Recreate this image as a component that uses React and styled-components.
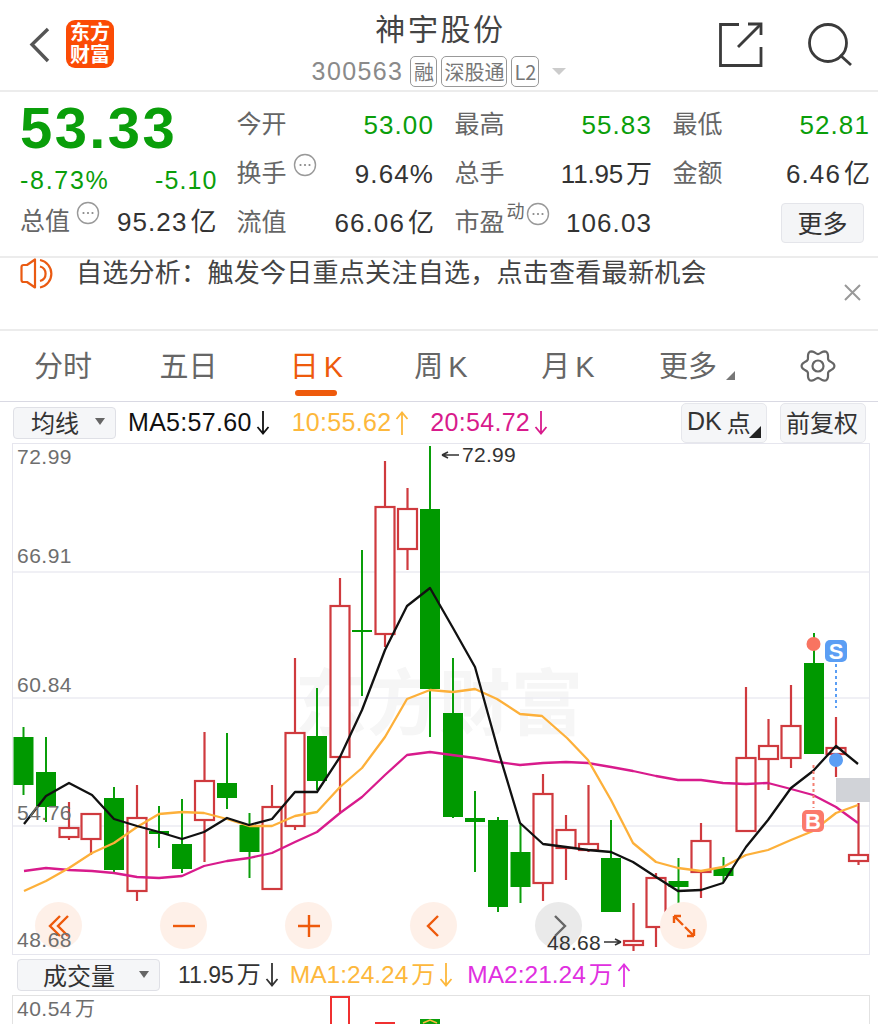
import React from 'react';
import styled, { createGlobalStyle } from 'styled-components';

const Global = createGlobalStyle`
  html, body { margin: 0; padding: 0; background: #fff; }
  body { font-family: "Liberation Sans", "Noto Sans CJK SC", sans-serif; width: 878px; height: 1024px; overflow: hidden; }
  * { box-sizing: border-box; }
`;

const GREEN = '#0a9e0a';
const Page = styled.div`
  width: 878px; height: 1024px; overflow: hidden; background: #fff; color: #333;
`;

/* Header */
const Header = styled.header`
  height: 92px; display: grid; grid-template-columns: 1fr auto 1fr; border-bottom: 2px solid #ececec;
`;
const HeaderLeft = styled.div`
  display: flex; align-items: flex-start; padding: 20px 0 0 28px; gap: 14px;
`;
const HeaderRight = styled.div`
  display: flex; justify-content: flex-end; align-items: flex-start; padding: 22px 25px 0 0; gap: 43px;
`;
const Logo = styled.svg`
  width: 48px; height: 48px; flex: none; overflow: visible;
`;
const HeaderCenter = styled.div`
  display: flex; flex-direction: column; align-items: center; padding-top: 6px;
`;
const Title = styled.div`
  font-family: "Noto Sans CJK SC", sans-serif; font-size: 30px; line-height: 42px; letter-spacing: 2.6px; color: #444; height: 42px; margin-left: 3px;
`;
const SubRow = styled.div`
  display: flex; align-items: center; margin-top: 7px; height: 32px; color: #8a8a8a;
`;
const Code = styled.span`
  font-size: 25px; letter-spacing: 1.4px; margin-right: 7px;
`;
const Badge = styled.span`
  display: inline-flex; align-items: center; justify-content: center; height: 31px; padding: 0 2px; margin-right: 4px;
  border: 1px solid #999; border-radius: 5px; font-family: "Noto Sans CJK SC", sans-serif; font-size: 20px; color: #777;
  min-width: 27px;
`;
const Caret = styled.span`
  width: 0; height: 0; margin-left: 9px; border-left: 7px solid transparent; border-right: 7px solid transparent; border-top: 7px solid #ccc;
`;

/* Quote */
const Quote = styled.section`
  height: 166px; display: flex; padding: 8px 8px 0 20px; border-bottom: 2px solid #ececec;
`;
const LeftBlock = styled.div`
  width: 197px; margin-right: 20px; display: flex; flex-direction: column;
`;
const Price = styled.div`
  font-size: 58px; font-weight: 700; line-height: 56px; height: 56px; color: ${GREEN}; letter-spacing: 2.4px;
`;
const ChangeRow = styled.div`
  height: 48px; display: flex; align-items: center; justify-content: space-between; color: ${GREEN}; font-size: 25px;
`;
const ChangeVal = styled.span`
  letter-spacing: ${p => p.$ls}px; margin-right: ${p => p.$mr || 0}px;
`;
const TotalRow = styled.div`
  height: 36px; display: flex; align-items: center; justify-content: space-between;
`;
const Stats = styled.div`
  flex: 1; display: grid; grid-template-columns: repeat(3, 197.5px); column-gap: 20.5px; grid-auto-rows: 49px;
`;
const Stat = styled.div`
  display: flex; align-items: center; justify-content: space-between;
`;
const Label = styled.span`
  display: inline-flex; align-items: flex-start; font-family: "Noto Sans CJK SC", sans-serif; font-size: 25px; color: #666; line-height: 30px; white-space: nowrap;
  padding-bottom: 6px;
`;
const Value = styled.span`
  font-size: 26px; line-height: 30px; letter-spacing: ${p => p.$tight ? '-0.2px' : '1.1px'}; color: ${p => p.$green ? GREEN : '#333'}; white-space: nowrap;
  font-family: "Liberation Sans", sans-serif;
`;
const Unit = styled.span`
  font-family: "Noto Sans CJK SC", sans-serif; font-size: ${p => p.$size || 26}px; line-height: 1; letter-spacing: 0; margin-left: 3px;
`;
const Sup = styled.span`
  font-size: 18px; line-height: 18px; margin: -4px 0 0 2px; color: #666;
`;
const MoreBtn = styled.div`
  width: 83px; height: 40px; margin-left: auto; margin-right: 6px; background: #f4f5f7; border: 1px solid #e4e5ea; border-radius: 4px;
  display: flex; align-items: center; justify-content: center; padding-bottom: 2px; font-family: "Noto Sans CJK SC", sans-serif; font-size: 25px; color: #333;
`;
const DotsWrap = styled.svg`
  width: 24px; height: 24px; margin: -3px 0 0 ${p => p.$ml}px; flex: none;
`;

/* Notice */
const Notice = styled.section`
  height: 73px; position: relative; display: flex; align-items: flex-start; padding: 0 0 0 20px; border-bottom: 2px solid #ececec;
`;
const NoticeText = styled.div`
  font-family: "Noto Sans CJK SC", sans-serif; font-size: 26px; line-height: 30px; margin: -2px 0 0 21px; color: #444; letter-spacing: .28px;
`;
const Close = styled.svg`
  position: absolute; right: 17px; top: 26px; width: 17px; height: 17px;
`;

/* Tabs */
const Tabs = styled.nav`
  height: 71px; display: grid; grid-template-columns: 126px 125px 131px 118px 136px 104px 138px; border-bottom: 1px solid #d9d9e3;
`;
const Tab = styled.div`
  position: relative; display: flex; align-items: center; justify-content: center; padding-bottom: 5px;
  font-family: "Noto Sans CJK SC", sans-serif; font-size: 29px; color: ${p => p.$active ? '#ee5a0c' : '#666'};
`;
const GearTab = styled(Tab)`
  padding: 0 0 0 18px;
`;
const TabK = styled.span`
  font-family: "Liberation Sans", sans-serif; font-size: 29px; margin-left: 5px;
`;
const Underline = styled.i`
  position: absolute; left: 50%; margin-left: -22px; bottom: 5px; width: 42px; height: 6px; border-radius: 3px; background: #ee5a0c;
`;
const CornerMark = styled.i`
  position: absolute; right: 5px; bottom: 21px; width: 0; height: 0; border-left: 9px solid transparent; border-bottom: 9px solid #777;
`;

/* Indicator rows */
const IndicatorRow = styled.div`
  height: ${p => p.$h || 41}px; display: flex; align-items: center; position: relative; padding-left: ${p => p.$pl || 13}px; font-size: ${p => p.$fs || 25}px;
`;
const Select = styled.div`
  width: ${p => p.$w}px; height: 32px; display: flex; align-items: center; justify-content: space-between; padding: 0 10px 2px ${p => p.$pl}px; margin-right: ${p => p.$mr}px;
  background: #f5f6f8; border: 1px solid #dfe0e6; border-radius: 4px; font-family: "Noto Sans CJK SC", sans-serif; font-size: 24px; color: #333; flex: none;
`;
const SelectCaret = styled.i`
  width: 0; height: 0; border-left: 5px solid transparent; border-right: 5px solid transparent; border-top: 7px solid #666;
`;
const MaText = styled.span`
  display: inline-flex; align-items: center; color: ${p => p.$c}; margin-right: ${p => p.$mr || 0}px; white-space: nowrap; letter-spacing: ${p => p.$ls ?? 0.3}px;
  font-family: "Liberation Sans", "Noto Sans CJK SC", sans-serif; font-size: ${p => p.$fs ? `${p.$fs}px` : 'inherit'};
`;
const ArrowSvg = styled.svg`
  width: 14px; height: 26px; margin-left: 4px; flex: none;
`;
const RightBtns = styled.div`
  margin-left: auto; margin-right: 12px; display: flex; gap: 13px;
`;
const SmallBtn = styled.div`
  position: relative; height: 40px; width: ${p => p.$w}px; background: #f5f6f8; border: 1px solid #e6e7ec; border-radius: 5px;
  display: flex; align-items: center; padding: 0 0 2px 5px; font-family: "Noto Sans CJK SC", sans-serif; font-size: 24px; color: #333; white-space: nowrap;
`;
const Dk = styled.span`
  font-family: "Liberation Sans", sans-serif; font-size: 25px; margin-right: 5px;
`;
const CornerBlack = styled.i`
  position: absolute; right: 5px; bottom: 4px; width: 0; height: 0; border-left: 12px solid transparent; border-bottom: 12px solid #222;
`;

/* Chart */
const ChartBox = styled.div`
  position: relative; width: 858px; height: 512px; margin-left: 12px; border: 1px solid #e6e6ee; background: #fff;
`;
const Watermark = styled.div`
  position: absolute; left: 282px; top: 214px; font-family: "Noto Sans CJK SC", sans-serif; font-weight: 700; font-size: 72px; line-height: 80px; color: #f6f6f6; letter-spacing: 0;
`;
const ChartSvg = styled.svg`
  position: absolute; left: -1px; top: -1px; width: 858px; height: 512px; overflow: visible;
`;
const AxisLabel = styled.span`
  position: absolute; left: 4px; top: ${p => p.$y}px; font-size: 21px; line-height: 24px; color: #6e6e6e; letter-spacing: .5px; white-space: nowrap;
  font-family: "Liberation Sans", "Noto Sans CJK SC", sans-serif;
`;
const CandleNote = styled.span`
  position: absolute; left: ${p => p.$x}px; top: ${p => p.$y}px; font-size: 21px; line-height: 24px; color: #333; white-space: nowrap; letter-spacing: .3px;
`;
const Controls = styled.div`
  position: absolute; left: 22px; top: 458px; display: flex; gap: 78px;
`;
const Round = styled.div`
  width: 47px; height: 47px; border-radius: 50%; background: ${p => p.$grey ? '#eaeaea' : '#fef0e8'};
  display: flex; align-items: center; justify-content: center;
`;
const RoundIcon = styled.svg`
  width: 30px; height: 30px; fill: none; stroke: ${p => p.$grey ? '#666' : '#ee5a0c'}; stroke-width: 2.4;
`;
const VolumeBox = styled.div`
  position: relative; width: 858px; height: 29px; margin-left: 12px; border: 1px solid #e2e2e2; border-bottom: 0;
`;
const VolSvg = styled.svg`
  position: absolute; left: -1px; top: -1px; width: 858px; height: 30px;
`;
const VolLabel = styled(AxisLabel)`
  left: 4px; top: 1px;
`;

const candles = [
  [23.5,'g',727,737,785,795],[46,'g',737,772,807,822],[69,'r',802,828,837,840],[91,'r',814,814,839,855],
  [114,'g',787,798,870,872],[137,'r',785,818,891,901],[159,'g',806,831,834,848],[182,'g',799,844,869,873],
  [204.5,'r',732,781,820,862],[227,'g',733,783,798,809],[249.5,'g',813,825,852,878],[272,'r',785,807,889,889],
  [295,'r',658,733,826,830],[317,'g',688,736,781,790],[340,'r',578,606,757,812],[362,'g',550,630,632,696],
  [385,'r',461,507,634,647],[407.5,'r',488,509,549,570],[430,'g',446,509,689,737],[453,'g',658,713,817,818],
  [475,'g',791,818,822,872],[498,'g',817,820,907,912],[520.5,'g',823,852,887,903],[543,'r',774,794,883,901],
  [566,'r',815,830,848,880],[588.5,'r',785,844,850,852],[611,'g',820,858,912,912],[633.5,'r',903,941,945,951],
  [656,'r',873,878,927,947],[678.5,'g',858,881,887,903],[701,'r',823,841,872,898],[723.5,'g',857,868,876,882],
  [746,'r',687,758,831,831],[768.5,'r',719,746,759,790],[791,'r',685,726,758,768],[814,'g',633,663,754,754],
  [836,'r',717,748,754,777],[858.5,'r',803,855,861,865],
];
const ma5 = '24,824 46,796 69,783 92,795 114,819 137,826 159,832 182,839 204,832 227,818 249,825 272,819 295,792 317,792 340,757 362,710 385,650 407,606 430,588 453,628 475,667 498,750 520,823 543,844 566,847 588,850 611,852 633,862 656,877 678,891 701,890 723,883 746,847 768,820 791,788 813,771 836,746 858,764';
const ma10 = '24,891 46,881 69,868 92,853 114,843 137,827 159,814 182,812 204,813 227,819 249,826 272,826 295,816 317,812 340,787 362,768 385,737 407,699 430,690 453,692 475,689 497,699 520,714 542,716 567,738 588,760 611,800 633,843 656,862 678,868 701,871 723,867 746,855 768,850 791,840 813,831 836,813 858,805';
const ma20 = '24,871 46,868 69,870 92,871 114,873 137,877 159,878 182,876 204,866 227,861 249,858 272,853 295,842 317,832 340,813 362,797 385,775 407,755 430,752 452,755 475,758 498,762 520,765 543,763 566,762 588,763 611,767 633,771 656,776 678,780 701,780 723,783 746,784 768,783 791,789 813,795 836,807 858,823';

const gearPath = (() => {
  const pts = [];
  for (let i = 0; i < 72; i++) {
    const t = (i / 72) * Math.PI * 2;
    const r = 14.2 + 2.2 * Math.cos(6 * t);
    pts.push(`${(18 + r * Math.cos(t)).toFixed(2)},${(17 + r * Math.sin(t)).toFixed(2)}`);
  }
  return `M${pts.join('L')}Z`;
})();

const Candle = ({ d: [x, kind, hi, top, bot, lo] }) => {
  if (kind === 'g') {
    return <g>
      <line x1={x} x2={x} y1={hi} y2={lo} stroke="#0a9e0a" strokeWidth="2" />
      <rect x={x - 10} y={top} width="20" height={Math.max(bot - top, 2)} fill="#009900" />
    </g>;
  }
  return <g stroke="#cf3a3e" strokeWidth="2.2">
    <line x1={x} x2={x} y1={hi} y2={top} />
    <line x1={x} x2={x} y1={bot} y2={lo} />
    <rect x={x - 9.5} y={top} width="19" height={bot - top} fill="#fff" />
  </g>;
};

const Arrow = ({ up, color }) => (
  <ArrowSvg viewBox="0 0 14 26" fill="none" stroke={color} strokeWidth="1.8">
    {up ? <path d="M7 25V3M1.5 9L7 2.5 12.5 9" /> : <path d="M7 1v22M1.5 17L7 23.5 12.5 17" />}
  </ArrowSvg>
);
const Dots = ({ ml = 6 }) => (
  <DotsWrap $ml={ml} viewBox="0 0 24 24">
    <circle cx="12" cy="12" r="10.5" fill="none" stroke="#999" strokeWidth="1.4" />
    <circle cx="7.5" cy="12" r="1.1" fill="#888" /><circle cx="12" cy="12" r="1.1" fill="#888" /><circle cx="16.5" cy="12" r="1.1" fill="#888" />
  </DotsWrap>
);

const Row = ({ label, value, unit, green, dots, sup, tight }) => (
  <Stat>
    <Label>{label}{sup && <Sup>{sup}</Sup>}{dots && <Dots ml={sup ? 1 : 6} />}</Label>
    <Value $green={green} $tight={tight}>{value}{unit && <Unit>{unit}</Unit>}</Value>
  </Stat>
);

const NOTICE = '自选分析\uFF1A触发今日重点关注自选\uFF0C点击查看最新机会';

export default function App() {
  return (
    <Page>
      <Global />
      <Header>
        <HeaderLeft>
          <svg width="24" height="48" viewBox="0 0 24 48" fill="none" stroke="#555" strokeWidth="3.4"><path d="M20 9L4 24.5 20 41" /></svg>
          <Logo viewBox="0 0 48 48">
            <rect width="48" height="48" rx="9" fill="#fb4b05" />
            <text x="24" y="20" textAnchor="middle" fontFamily="Noto Sans CJK SC" fontWeight="700" fontSize="20" fill="#fff">东方</text>
            <text x="24" y="41.5" textAnchor="middle" fontFamily="Noto Sans CJK SC" fontWeight="700" fontSize="20" fill="#fff">财富</text>
          </Logo>
        </HeaderLeft>
        <HeaderCenter>
          <Title>神宇股份</Title>
          <SubRow>
            <Code>300563</Code>
            <Badge>融</Badge><Badge>深股通</Badge><Badge>L2</Badge>
            <Caret />
          </SubRow>
        </HeaderCenter>
        <HeaderRight>
          <svg width="46" height="46" viewBox="0 0 46 46" fill="none" stroke="#3b3b3b" strokeWidth="2.8">
            <path d="M21 2.5H2.5V43.5H43V25" /><path d="M43 13V2H30" /><path d="M43 2L20 25" />
          </svg>
          <svg width="46" height="46" viewBox="0 0 46 46" fill="none" stroke="#3b3b3b" strokeWidth="2.8">
            <circle cx="21" cy="21" r="18.5" /><path d="M33 33L44 43" />
          </svg>
        </HeaderRight>
      </Header>

      <Quote>
        <LeftBlock>
          <Price>53.33</Price>
          <ChangeRow><ChangeVal $ls={1.7}>-8.73%</ChangeVal><ChangeVal $ls={1.1} $mr={-1}>-5.10</ChangeVal></ChangeRow>
          <TotalRow>
            <Label>总值<Dots /></Label>
            <Value>95.23<Unit>亿</Unit></Value>
          </TotalRow>
        </LeftBlock>
        <Stats>
          <Row label="今开" value="53.00" green />
          <Row label="最高" value="55.83" green />
          <Row label="最低" value="52.81" green />
          <Row label="换手" value="9.64%" dots />
          <Row label="总手" value="11.95" unit="万" tight />
          <Row label="金额" value="6.46" unit="亿" />
          <Row label="流值" value="66.06" unit="亿" />
          <Row label="市盈" sup="动" dots value="106.03" />
          <Stat><MoreBtn>更多</MoreBtn></Stat>
        </Stats>
      </Quote>

      <Notice>
        <svg width="35" height="32" viewBox="0 0 35 32" fill="none" stroke="#ea5a12" strokeWidth="2.2">
          <path d="M15 1.5V29.5L7 24H3.5A2 2 0 0 1 1.5 22V9A2 2 0 0 1 3.5 7H7Z" strokeLinejoin="round" />
          <path d="M20 8.5A7.5 7.5 0 0 1 20 23" /><path d="M20 2A14 14 0 0 1 20 29.5" />
        </svg>
        <NoticeText>{NOTICE}</NoticeText>
        <Close viewBox="0 0 17 17" stroke="#999" strokeWidth="2"><path d="M1 1L16 16M16 1L1 16" /></Close>
      </Notice>

      <Tabs>
        <Tab>分时</Tab>
        <Tab>五日</Tab>
        <Tab $active><span>日<TabK>K</TabK></span><Underline /></Tab>
        <Tab><span>周<TabK>K</TabK></span></Tab>
        <Tab><span>月<TabK>K</TabK></span></Tab>
        <Tab>更多<CornerMark /></Tab>
        <GearTab>
          <svg width="36" height="34" viewBox="0 0 36 34" fill="none" stroke="#666" strokeWidth="2.2">
            <path d={gearPath} />
            <circle cx="18" cy="17" r="5.5" />
          </svg>
        </GearTab>
      </Tabs>

      <IndicatorRow>
        <Select $w={103} $pl={17} $mr={12}>均线<SelectCaret /></Select>
        <MaText $c="#111" $mr={22}>MA5:57.60<Arrow color="#111" /></MaText>
        <MaText $c="#fdb83c" $mr={21}>10:55.62<Arrow up color="#fdb83c" /></MaText>
        <MaText $c="#d81b8c">20:54.72<Arrow color="#d81b8c" /></MaText>
        <RightBtns>
          <SmallBtn $w={86}><Dk>DK</Dk>点<CornerBlack /></SmallBtn>
          <SmallBtn $w={86}>前复权</SmallBtn>
        </RightBtns>
      </IndicatorRow>

      <ChartBox>
        <Watermark>东方财富</Watermark>
        <ChartSvg viewBox="12 443 858 512">
          <g stroke="#ebebf2" strokeWidth="1.5">
            <line x1="13" x2="869" y1="572" y2="572" />
            <line x1="13" x2="869" y1="698" y2="698" />
            <line x1="13" x2="869" y1="826" y2="826" />
          </g>
          <rect x="836" y="778" width="34" height="24" fill="#d1d3d8" />
          {candles.map((d, i) => <Candle key={i} d={d} />)}
          <polyline points={ma20} fill="none" stroke="#d81b8c" strokeWidth="2.3" strokeLinejoin="round" />
          <polyline points={ma10} fill="none" stroke="#fdb03a" strokeWidth="2.3" strokeLinejoin="round" />
          <polyline points={ma5} fill="none" stroke="#111" strokeWidth="2.3" strokeLinejoin="round" />
          <line x1="836" x2="836" y1="664" y2="708" stroke="#5b9ef4" strokeWidth="2" strokeDasharray="3 3" />
          <line x1="813.5" x2="813.5" y1="765" y2="808" stroke="#f47f72" strokeWidth="2" strokeDasharray="3 3" />
          <circle cx="813.5" cy="644" r="7" fill="#f87461" />
          <circle cx="836" cy="760" r="7" fill="#5b9ef4" />
          <rect x="825" y="640" width="22" height="22" rx="5" fill="#5b9ef4" />
          <text x="836" y="659" textAnchor="middle" fontSize="22" fontWeight="700" fill="#fff" fontFamily="Liberation Sans">S</text>
          <rect x="802" y="810" width="22" height="22" rx="5" fill="#fb7a6b" />
          <text x="813" y="829" textAnchor="middle" fontSize="22" fontWeight="700" fill="#fff" fontFamily="Liberation Sans">B</text>
          <path d="M442 455H459M442 455L448 452M442 455L448 458" stroke="#333" strokeWidth="1.6" fill="none" />
          <path d="M604 942H621M621 942L615 939M621 942L615 945" stroke="#333" strokeWidth="1.6" fill="none" />
        </ChartSvg>
        <Controls>
          <Round><RoundIcon viewBox="0 0 30 30"><path d="M16 5L6 15 16 25M24 5L14 15 24 25" /></RoundIcon></Round>
          <Round><RoundIcon viewBox="0 0 30 30"><path d="M4 15H26" /></RoundIcon></Round>
          <Round><RoundIcon viewBox="0 0 30 30"><path d="M4 15H26M15 4V26" /></RoundIcon></Round>
          <Round><RoundIcon viewBox="0 0 30 30"><path d="M19 5L9 15 19 25" /></RoundIcon></Round>
          <Round $grey><RoundIcon $grey viewBox="0 0 30 30"><path d="M11 5L21 15 11 25" /></RoundIcon></Round>
          <Round><RoundIcon viewBox="0 0 30 30"><path d="M5 5L14 14M5 5V12M5 5H12M25 25L16 16M25 25V18M25 25H18" /></RoundIcon></Round>
        </Controls>
        <AxisLabel $y={1}>72.99</AxisLabel>
        <AxisLabel $y={100}>66.91</AxisLabel>
        <AxisLabel $y={229}>60.84</AxisLabel>
        <AxisLabel $y={357}>54.76</AxisLabel>
        <AxisLabel $y={484}>48.68</AxisLabel>
        <CandleNote $x={449} $y={-1}>72.99</CandleNote>
        <CandleNote $x={534} $y={487}>48.68</CandleNote>
      </ChartBox>

      <IndicatorRow $pl={17} $h={40} $fs={24.5}>
        <Select $w={143} $pl={25} $mr={18}>成交量<SelectCaret /></Select>
        <MaText $c="#333" $mr={11} $ls={0} $fs={23}><span>11.95<Unit $size={24}>万</Unit></span><Arrow color="#333" /></MaText>
        <MaText $c="#fdb83c" $mr={14} $ls={0}><span>MA1:24.24<Unit $size={24}>万</Unit></span><Arrow color="#fdb83c" /></MaText>
        <MaText $c="#e030e0" $ls={0}><span>MA2:21.24<Unit $size={24}>万</Unit></span><Arrow up color="#e030e0" /></MaText>
      </IndicatorRow>

      <VolumeBox>
        <VolSvg viewBox="12 995 858 30">
          <rect x="331" y="997" width="18" height="30" fill="#fff" stroke="#f03030" strokeWidth="2" />
          <rect x="375" y="1022" width="20" height="6" fill="#f03030" />
          <rect x="420" y="1019" width="20" height="6" fill="#0a9e0a" />
          <path d="M423 1023L430 1020 437 1023" fill="none" stroke="#fdb83c" strokeWidth="1.5" />
        </VolSvg>
        <VolLabel>40.54<Unit $size={20}>万</Unit></VolLabel>
      </VolumeBox>
    </Page>
  );
}
